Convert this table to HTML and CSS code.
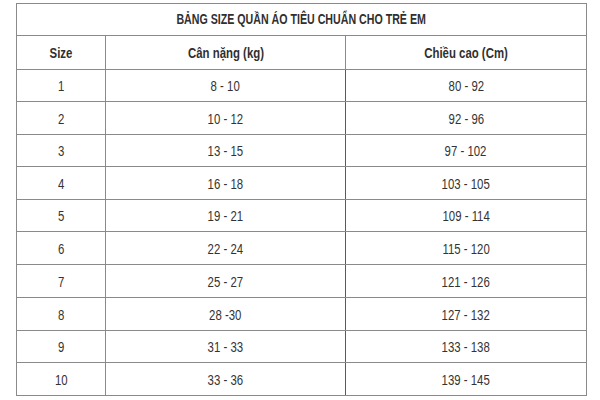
FILE: index.html
```html
<!DOCTYPE html>
<html lang="vi">
<head>
<meta charset="utf-8">
<title>Bảng size quần áo tiêu chuẩn cho trẻ em</title>
<link rel="stylesheet" href="styles.css">
</head>
<body>
<table class="size-table">
  <colgroup>
    <col class="c-size">
    <col class="c-weight">
    <col class="c-height">
  </colgroup>
  <thead>
    <tr class="r-title"><th colspan="3" class="title"><span class="t">BẢNG SIZE QUẦN ÁO TIÊU CHUẨN CHO TRẺ EM</span></th></tr>
    <tr class="r-head"><th><span class="t">Size</span></th><th><span class="t">Cân nặng (kg)</span></th><th><span class="t">Chiều cao (Cm)</span></th></tr>
  </thead>
  <tbody>
    <tr class="r-a"><td><span class="t">1</span></td><td><span class="t">8 - 10</span></td><td><span class="t">80 - 92</span></td></tr>
    <tr class="r-b"><td><span class="t">2</span></td><td><span class="t">10 - 12</span></td><td><span class="t">92 - 96</span></td></tr>
    <tr class="r-a"><td><span class="t">3</span></td><td><span class="t">13 - 15</span></td><td><span class="t">97 - 102</span></td></tr>
    <tr class="r-b dark"><td><span class="t">4</span></td><td><span class="t">16 - 18</span></td><td><span class="t">103 - 105</span></td></tr>
    <tr class="r-a"><td><span class="t">5</span></td><td><span class="t">19 - 21</span></td><td><span class="t">109 - 114</span></td></tr>
    <tr class="r-b dark"><td><span class="t">6</span></td><td><span class="t">22 - 24</span></td><td><span class="t">115 - 120</span></td></tr>
    <tr class="r-b"><td><span class="t">7</span></td><td><span class="t">25 - 27</span></td><td><span class="t">121 - 126</span></td></tr>
    <tr class="r-b dark"><td><span class="t">8</span></td><td><span class="t">28 -30</span></td><td><span class="t">127 - 132</span></td></tr>
    <tr class="r-a"><td><span class="t">9</span></td><td><span class="t">31 - 33</span></td><td><span class="t">133 - 138</span></td></tr>
    <tr class="r-b dark"><td><span class="t">10</span></td><td><span class="t">33 - 36</span></td><td><span class="t">139 - 145</span></td></tr>
  </tbody>
</table>
</body>
</html>
```

FILE: styles.css
```css
html, body {
  margin: 0;
  padding: 0;
  background: #ffffff;
}

body {
  padding: 3px 0 0 16px;
  font-family: "Liberation Sans", Arial, sans-serif;
  color: #333333;
}

.size-table {
  border-collapse: collapse;
  table-layout: fixed;
  width: 570px;
}

.c-size { width: 89px; }
.c-weight { width: 240px; }
.c-height { width: 241px; }

.size-table th,
.size-table td {
  border: 1px solid #8a8a8a;
  padding: 0;
  text-align: center;
  vertical-align: middle;
  font-size: 15px;
  line-height: 17px;
}

.size-table th {
  font-weight: bold;
  color: #303030;
}

.size-table td {
  font-weight: normal;
}

.size-table .title {
  font-size: 14px;
}

.t {
  display: inline-block;
  transform: scaleX(0.76);
  white-space: nowrap;
}

.r-title { height: 32px; }
.r-head { height: 34px; }
.r-a { height: 32px; }
.r-b { height: 33px; }

.dark td {
  border-top-color: #4a4a4a;
}

.size-table td:nth-child(2) {
  border-right-color: #5a5a5a;
}
```
